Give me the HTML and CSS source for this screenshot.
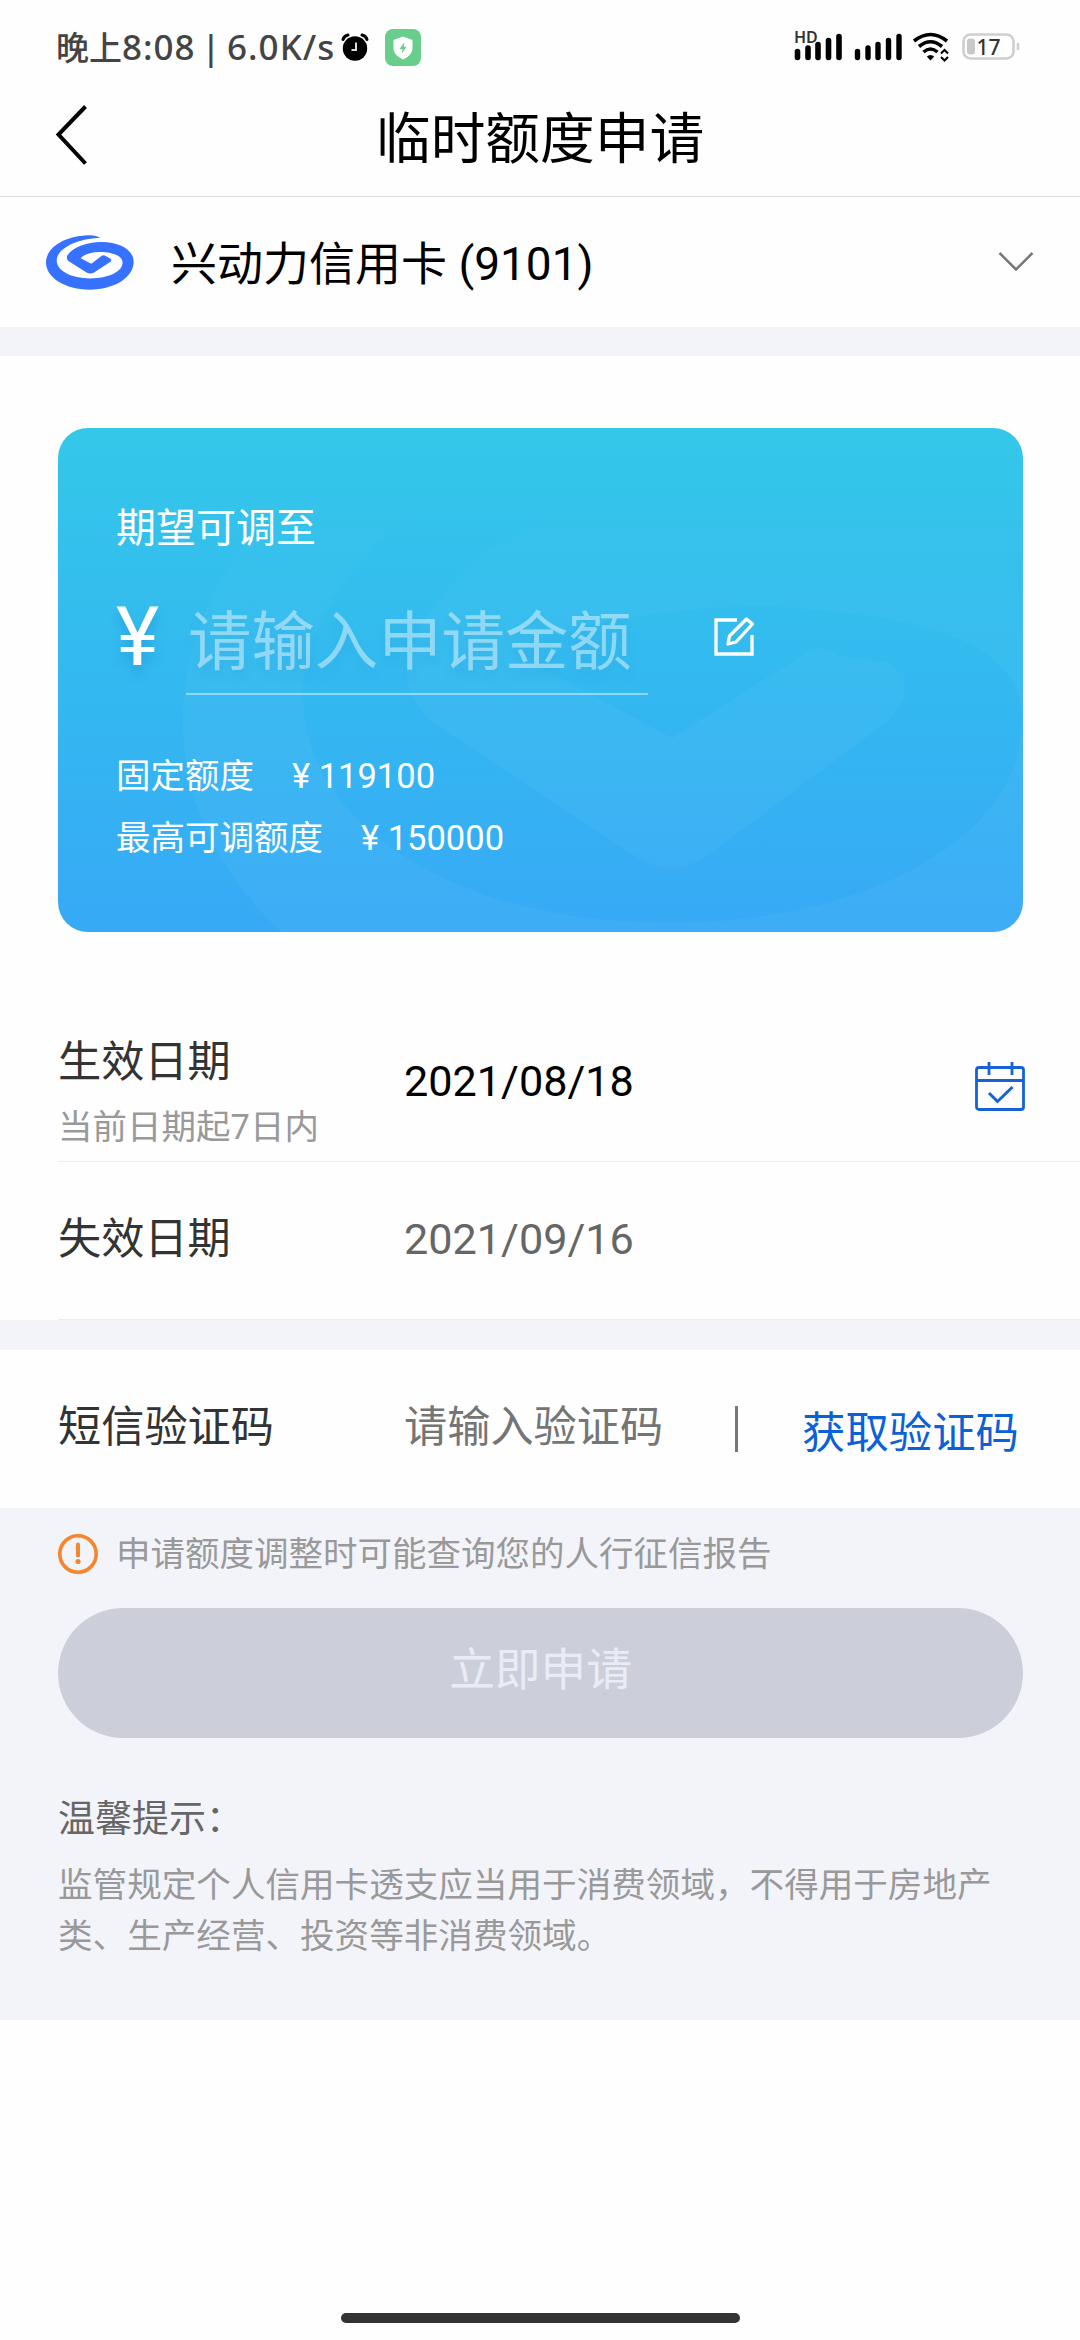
FILE: index.html
```html
<!DOCTYPE html>
<html lang="zh-CN">
<head>
<meta charset="utf-8">
<title>临时额度申请</title>
<link rel="stylesheet" href="styles.css">
</head>
<body>
<div class="statusbar">
  <span class="status-text">晚上<span class="latin">8:08 | 6.0K/s</span></span>
  <svg class="alarm" width="28" height="28" viewBox="0 0 28 28"><circle cx="14" cy="15.5" r="12.2"/><path d="M2 6.5Q3 3 7 2M26 6.5Q25 3 21 2" fill="none" stroke="#000" stroke-width="3" stroke-linecap="round"/><path d="M15 9.5V17H10.5" fill="none" stroke="#ddd" stroke-width="2"/></svg>
  <svg class="shield" width="36" height="37" viewBox="0 0 36 37"><rect width="36" height="37" rx="8" fill="#67cf8b"/><path d="M18 7.500 27.500 11V19C27.500 24.500 23 28 18 30.500 13 28 8.500 24.500 8.500 19V11Z" fill="#fff"/><path d="M19.500 13 14.500 20H17.500L16.800 24.500 21.500 17.800H18.700Z" fill="#67cf8b"/></svg>
  <div class="status-right">
    <div class="signal hd">
      <span class="hd-label">HD</span>
      <svg width="48" height="28" viewBox="0 0 48 28"><path d="M3.500 18.500V24.500M14 15V24.500M24 11.500V24.500M34.500 7.500V24.500M45 3.500V24.500" stroke="#000" stroke-width="5.600" stroke-linecap="round"/></svg>
    </div>
    <svg class="signal2" width="48" height="28" viewBox="0 0 48 28"><path d="M3.500 18.500V24.500M14 15V24.500M24 11.500V24.500M34.500 7.500V24.500M45 3.500V24.500" stroke="#000" stroke-width="5.400" stroke-linecap="round"/></svg>
    <svg class="wifi" width="36" height="30" viewBox="0 0 36 30"><g fill="none" stroke="#000" stroke-width="3.600"><path d="M1 9Q17.500-4 34 9"/><path d="M6 14.500Q17.500 5 29 14.500"/><path d="M10.500 20Q17.500 14 24.500 20"/></g><path d="M17.500 28.500 13.800 24.500Q17.500 21.500 21.200 24.500Z"/><path d="M28 21.500 31.500 18 35 21.500M28 25 31.500 28.500 35 25" fill="none" stroke="#000" stroke-width="2"/></svg>
    <svg class="battery" width="58" height="28" viewBox="0 0 58 28"><rect x="1.500" y="1.500" width="50" height="24" rx="7" fill="#fff" stroke="#cfcfcf" stroke-width="2.600"/><rect x="5" y="5.500" width="8" height="16" rx="3" fill="#c9c9c9"/><path d="M56 10v7" stroke="#cfcfcf" stroke-width="2.500"/><text x="14.500" y="22" class="battery-text">17</text></svg>
  </div>
</div>

<header class="navbar">
  <svg class="back" width="34" height="62" viewBox="0 0 34 62"><path d="M30.500 2.500 3.500 30.500 30.500 59.500" fill="none" stroke="#000" stroke-width="4"/></svg>
  <h1 class="title">临时额度申请</h1>
</header>

<section class="account">
  <svg class="logo" width="88" height="55" viewBox="30 47 262 166" preserveAspectRatio="none"><path fill="#3672ff" d="M192 55C175 46 150 47 140 49 78 54 30 88 30 130 30 176 88 212 160 212 232 212 291 176 291 128 291 92 250 68 195 68 150 68 108 85 94 108 90 114 92 122 99 127L152 161Q162 166 172 161L222 128Q227 122 221 118L205 109Q200 107 194 111L165 134 133 117C145 105 165 98 190 98 228 98 258 110 258 130 258 158 215 178 162 178 105 178 62 155 62 124 62 88 120 58 192 55Z"/></svg>
  <span class="account-name">兴动力信用卡 (9101)</span>
  <svg class="chevron" width="36" height="22" viewBox="0 0 36 22"><path d="M1.500 2 18 18.500 34.500 2" fill="none" stroke="#777" stroke-width="2.500"/></svg>
</section>

<section class="limit">
  <div class="card">
    <svg class="watermark" width="965" height="504" viewBox="0 0 965 504"><defs><linearGradient id="fade" gradientUnits="userSpaceOnUse" x1="0" y1="60" x2="0" y2="320"><stop offset="0" stop-color="#fff" stop-opacity="0"/><stop offset=".5" stop-color="#fff" stop-opacity=".025"/><stop offset="1" stop-color="#fff" stop-opacity=".036"/></linearGradient></defs><path fill="url(#fade)" d="M632-23C569-60 477-55 444-48 301-26 125 117 125 293 125 486 338 638 603 638 868 638 1085 486 1085 285 1085 134 934 33 732 33 566 33 412 104 363 200 340 240 345 270 379 297L580 430Q613 450 646 430L827 295Q864 262 832 235L779 227Q762 214 745 227L614 310 450 222C541 188 640 178 713 178 850 188 964 205 964 293 964 411 806 495 610 495 401 495 245 398 245 268 245 117 456-9 632-23Z"/></svg>
    <div class="card-label">期望可调至</div>
    <div class="amount">
      <span class="yen">¥</span>
      <div class="amount-input">请输入申请金额</div>
      <svg class="edit" width="42" height="42" viewBox="0 0 42 42" fill="none" stroke="#fff" stroke-width="3.300"><path d="M23 5H2V39H38V20"/><path d="M32.500 4 38.500 9 22 27 14 29 15.500 21Z" stroke-linejoin="round"/></svg>
    </div>
    <div class="fact"><span>固定额度</span><span>¥ 119100</span></div>
    <div class="fact"><span>最高可调额度</span><span>¥ 150000</span></div>
  </div>
</section>

<section class="dates">
  <div class="row start">
    <div class="label">生效日期<small class="hint">当前日期起7日内</small></div>
    <span class="value">2021/08/18</span>
    <svg class="calendar" width="50" height="50" viewBox="0 0 50 50" fill="none" stroke="#1763d6" stroke-width="2.800"><rect x="1.500" y="6.500" width="47" height="42" rx="2.500"/><path d="M1.500 19.500H48.500M14 1V14M37 1V14"/><path d="M14 32 22.500 40.500 37.500 26" stroke-width="3"/></svg>
  </div>
  <div class="row end">
    <div class="label">失效日期</div>
    <span class="value muted">2021/09/16</span>
  </div>
</section>

<section class="sms">
  <span class="label">短信验证码</span>
  <span class="sms-input">请输入验证码</span>
  <i class="bar"></i>
  <a class="get-code">获取验证码</a>
</section>

<section class="footer">
  <div class="notice">
    <svg width="40" height="40" viewBox="0 0 40 40"><circle cx="20" cy="20" r="18.200" fill="none" stroke="#f5852f" stroke-width="3.600"/><path d="M20 10.500V21.500" stroke="#f5852f" stroke-width="4" stroke-linecap="round"/><circle cx="20" cy="27.500" r="2.600" fill="#f5852f"/></svg>
    <span class="notice-text">申请额度调整时可能查询您的人行征信报告</span>
  </div>
  <div class="submit">立即申请</div>
  <h2 class="tips-title">温馨提示：</h2>
  <p class="tips">监管规定个人信用卡透支应当用于消费领域，不得用于房地产类、生产经营、投资等非消费领域。</p>
</section>

<div class="home-indicator"></div>
</body>
</html>
```

FILE: styles.css
```css
* { box-sizing: border-box; }
body {
  margin: 0;
  width: 1080px;
  height: 2340px;
  display: flex;
  flex-direction: column;
  background: #fefefe;
  color: #000;
  font-family: Roboto, "Noto Sans CJK SC", sans-serif;
  overflow: hidden;
}
svg { display: block; flex: none; }
section, header { flex: none; }
h1, h2, p { margin: 0; font-weight: 400; }

.statusbar {
  flex: none;
  height: 80px;
  padding: 14px 60px 0 56px;
  display: flex;
  align-items: center;
}
.status-text {
  width: 276px;
  padding-top: 1px;
  font: 500 33px/48px "Noto Sans", "Noto Sans CJK SC", sans-serif;
  color: #444;
  white-space: nowrap;
}
.latin { font-size: 35px; letter-spacing: 1px; word-spacing: -4.500px; }
.alarm { margin-left: 9px; }
.shield { margin-left: 16px; }
.status-right { margin-left: auto; display: flex; align-items: center; }
.signal { position: relative; }
.hd-label {
  position: absolute;
  left: 0;
  top: -4px;
  font: 600 16px/16px "Noto Sans", sans-serif;
  color: #333;
}
.signal2 { margin-left: 12px; }
.wifi { margin-left: 11px; }
.battery { margin-left: 13px; }
.battery-text { font: 500 21px "Noto Sans", sans-serif; fill: #333; }

.navbar {
  height: 117px;
  border-bottom: 1px solid #dedede;
  display: grid;
  grid-template-columns: 200px 1fr 200px;
  align-items: center;
}
.back { margin: 0 0 7px 55px; }
.title { padding-top: 2px; text-align: center; font-size: 54.700px; line-height: 64px; }

.account {
  height: 130px;
  padding: 0 46px;
  display: flex;
  align-items: center;
}
.account-name { margin-left: 37px; padding-top: 4px; font-size: 46px; line-height: 60px; }
.chevron { margin-left: auto; }

.limit {
  border-top: 29px solid #f3f4fa;
  padding: 72px 57px 0 58px;
}
.card {
  position: relative;
  height: 504px;
  border-radius: 30px;
  overflow: hidden;
  padding: 76px 58px 0;
  background: linear-gradient(#33c8e9, #33b9f0 50%, #37a9f6);
  color: #fff;
}
.watermark { position: absolute; left: 0; top: 0; }
.card-label { position: relative; font-size: 40px; line-height: 50px; }
.amount {
  position: relative;
  display: flex;
  height: 141px;
  margin-bottom: 50px;
}
.yen {
  width: 70px;
  padding-top: 35px;
  font-size: 82px;
  line-height: 96px;
  text-shadow: 0 8px 10px rgba(30, 120, 200, .35);
}
.amount-input {
  width: 462px;
  padding: 50px 0 0 2px;
  border-bottom: 2px solid rgba(255, 255, 255, .45);
  font-size: 63.400px;
  line-height: 76px;
  color: rgba(255, 255, 255, .45);
  white-space: nowrap;
  text-shadow: 0 8px 10px rgba(30, 120, 200, .12);
}
.edit { margin: 61px 0 0 66px; }
.fact {
  position: relative;
  display: flex;
  gap: 38px;
  font-size: 34.500px;
  line-height: 62px;
}

.dates { padding: 68px 0 0 58px; }
.row {
  display: grid;
  grid-template-columns: 346px 1fr auto;
  align-items: center;
  border-bottom: 1px solid #ededf0;
}
.start { height: 162px; }
.start .label { padding-top: 25px; }
.start .value { padding-top: 3px; }
.end { height: 158px; padding-bottom: 1px; }
.label { font-size: 43.200px; line-height: 56px; color: #333; }
.hint { display: block; margin-top: 11px; font-size: 34.500px; line-height: 50px; color: #999; }
.value { font-size: 43.200px; line-height: 56px; }
.muted { color: #666; }
.calendar { margin: 11px 55px 0 0; }

.sms {
  border-top: 30px solid #f3f4fa;
  height: 188px;
  padding: 0 61px 0 58px;
  display: flex;
  align-items: center;
}
.sms .label { width: 346px; padding-bottom: 2px; }
.sms-input { width: 331px; padding-bottom: 2px; font-size: 43.200px; line-height: 56px; color: #757575; }
.bar { width: 3px; height: 46px; background: #777; }
.get-code { margin-left: auto; padding-top: 9px; font-size: 43.400px; line-height: 56px; color: #0b61d6; }

.footer {
  height: 512px;
  padding: 0 58px;
  background: #f3f4fa;
}
.notice {
  height: 92px;
  display: flex;
  align-items: center;
  gap: 18px;
  font-size: 34.500px;
  color: #999;
}
.notice-text { padding-bottom: 6px; }
.submit {
  height: 130px;
  margin: 8px -1px 0 0;
  border-radius: 65px;
  background: #cccfda;
  color: #e9ecf6;
  font-size: 45.700px;
  line-height: 126px;
  text-align: center;
}
.tips-title { margin-top: 56px; font-size: 37px; line-height: 52px; color: #666; }
.tips { margin: 14px -10px 0 0; font-size: 34.600px; line-height: 51px; color: #999; }

.home-indicator {
  width: 399px;
  height: 10px;
  margin: auto auto 17px;
  border-radius: 5px;
  background: #333;
  flex: none;
}
```
